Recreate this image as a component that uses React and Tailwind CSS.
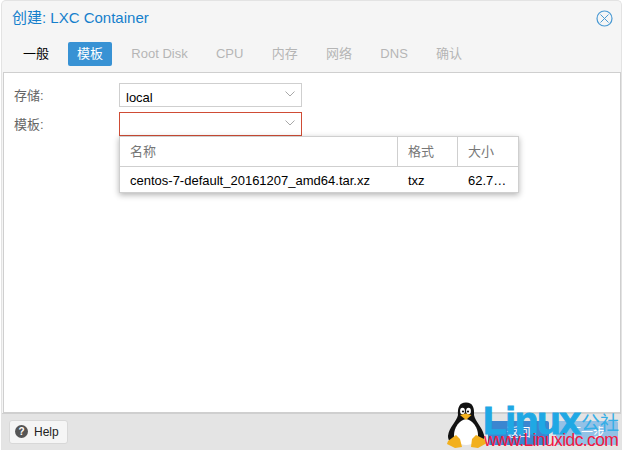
const sans = "font-['Liberation_Sans','Noto_Sans_CJK_SC',sans-serif]";

const tabs = ["Root Disk", "CPU", "内存", "网络", "DNS", "确认"];

function Chevron() {
  return (
    <svg width="10" height="6" viewBox="0 0 10 6" className="absolute right-[6px] top-[7px]">
      <path d="M0.5 0.5 L5 5 L9.5 0.5" fill="none" stroke="#a8a8a8" strokeWidth="1" />
    </svg>
  );
}

function Penguin() {
  return (
    <svg width="42" height="46" viewBox="0 0 42 46" className="absolute left-[445px] top-[402px]">
      <path d="M21 0.500 C14 0.500 12.500 6 13 13 C12 19 4 25 3 34 C3 39 6 41 10 41 L32 41 C37 41 40 38 39 33 C37 25 30 19 29 13 C29.500 6 28 0.500 21 0.500 Z" fill="#121212" />
      <path d="M21 17 C14 18 9 26 9 33 C9 39 14 43 21 43 C28 43 33 39 33 33 C33 26 28 18 21 17 Z" fill="#fff" />
      <ellipse cx="17.500" cy="9" rx="2.400" ry="3.200" fill="#fff" />
      <ellipse cx="23.500" cy="9" rx="2.400" ry="3.200" fill="#fff" />
      <circle cx="18" cy="9.500" r="1.100" fill="#111" />
      <circle cx="23" cy="9.500" r="1.100" fill="#111" />
      <path d="M15 13 L20.500 11.500 L26.500 13 L21 18 Z" fill="#f2b01e" />
      <path d="M11 33 L3 39 L2 42 L10 46 L17 45 L15 37 Z" fill="#f2b01e" />
      <path d="M31 33 L39 37 L42 41 L33 46 L26 45 L27 37 Z" fill="#f2b01e" />
    </svg>
  );
}

export default function App() {
  return (
    <div className={`${sans} relative w-[623px] h-[450px] overflow-hidden bg-white text-[13px]`}>
      <div className="h-[450px] ml-[1px] mr-[1px] rounded-t-[5px] border-x border-t border-[#e3e3e3] bg-[#f5f5f5]">
        <div className="flex items-center justify-between h-[35px] pl-[10px] pr-[8px]">
          <span className="text-[15px] text-[#157fcc]">创建: LXC Container</span>
          <svg width="17" height="17" viewBox="0 0 17 17">
            <circle cx="8.500" cy="8.500" r="7.500" fill="none" stroke="#4a9ad4" strokeWidth="1.200" />
            <path d="M4.500 4.500 L12.500 12.500 M12.500 4.500 L4.500 12.500" stroke="#4a9ad4" strokeWidth="1" />
          </svg>
        </div>

        <div className="flex items-center h-[24px] mt-[6px] pl-[12px]">
          <span className="px-[9px] text-black">一般</span>
          <span className="ml-[10px] px-[9px] h-[24px] leading-[24px] rounded-[2px] bg-[#3892d4] text-white">模板</span>
          {tabs.map((t) => (
            <span key={t} className="ml-[10.300px] px-[9px] text-[#b5b5b5]">{t}</span>
          ))}
        </div>

        <div className="h-[341px] mt-[6px] ml-[1px] border border-[#cfcfcf] bg-white px-[10px] pt-[10px]">
          <div className="flex items-center h-[24px] text-[#666]">
            <span className="w-[105px] pt-[1px]">存储:</span>
            <div className="relative w-[183px] h-[24px] border border-[#cfcfcf] pl-[6px] pt-[4px] leading-[20px] text-black">
              local
              <Chevron />
            </div>
          </div>
          <div className="flex items-center h-[24px] mt-[5px] text-[#666]">
            <span className="w-[105px] pt-[1px]">模板:</span>
            <div className="relative w-[183px] h-[24px] border border-[#cf4c35]">
              <Chevron />
            </div>
          </div>
        </div>

        <div className="flex items-center justify-between h-[37px] bg-[#e4e4e4] border-t border-[#cfcfcf] pl-[7px] pr-[3px]">
          <div className="flex items-center w-[59px] h-[24px] mt-[-1px] pl-[5px] rounded-[3px] border border-[#d8d8d8] bg-[#f5f5f5] text-[12px] text-[#222]">
            <span className="flex items-center justify-center w-[13px] h-[13px] rounded-full bg-[#555] text-[10px] font-bold text-white">?</span>
            <span className="ml-[6px]">Help</span>
          </div>
          <div className="flex gap-[7px] mt-[1px]">
            <span className="w-[61px] h-[24px] leading-[24px] text-center rounded-[2px] bg-[#3b86d0] text-[12px] text-white">返回</span>
            <span className="w-[62px] h-[24px] leading-[24px] text-center rounded-[2px] bg-[#93c1e6] text-[12px] text-white">下一步</span>
          </div>
        </div>
      </div>

      <div className="absolute left-[119px] top-[136px] w-[400px] h-[57px] border border-[#cfcfcf] bg-white shadow-[0_2px_6px_rgba(0,0,0,0.3)]">
        <div className="flex h-[30px] leading-[30px] border-b border-[#cfcfcf] text-[#777]">
          <span className="w-[278px] pl-[10px] border-r border-[#cfcfcf]">名称</span>
          <span className="w-[60px] pl-[10px] border-r border-[#cfcfcf]">格式</span>
          <span className="pl-[10px]">大小</span>
        </div>
        <div className="flex h-[26px] leading-[28px] text-black">
          <span className="w-[278px] pl-[10px]">centos-7-default_20161207_amd64.tar.xz</span>
          <span className="w-[60px] pl-[10px]">txz</span>
          <span className="pl-[10px]">62.7…</span>
        </div>
      </div>

      <Penguin />
      <div className="absolute left-[483px] top-[398px] text-[39px] leading-[46px] font-bold tracking-[-1.500px] text-[#1fa8e4] [-webkit-text-stroke:1px_#1fa8e4]">Linux</div>
      <div className="absolute left-[581px] top-[413px] text-[19px] leading-[22px] text-[#35aee6]">公社</div>
      <div className="absolute left-[484px] top-[430px] text-[17.500px] leading-[20px] tracking-[-0.600px] text-[#f4173f]">www.Linuxidc.com</div>
    </div>
  );
}
